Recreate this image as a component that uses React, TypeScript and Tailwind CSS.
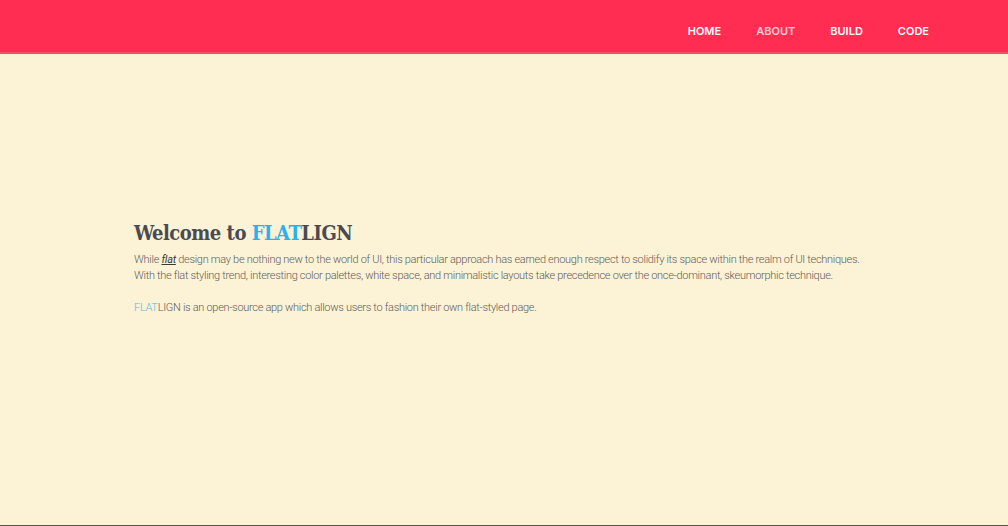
const App = () => {
  return (
    <div className="min-h-screen h-[526px] flex flex-col bg-[#fcf3d7] border-b border-[#55534c]">
      {/* Header */}
      <header className="h-[54px] shrink-0 bg-[#fe2d51] border-b-2 border-[#fe4a63] flex items-center justify-end pr-[79px]">
        <nav className="flex items-center gap-[35px] font-['Inter',sans-serif] text-[11px] font-semibold text-white pt-[11px]">
          <a className="cursor-pointer">HOME</a>
          <a className="cursor-pointer text-white/75">ABOUT</a>
          <a className="cursor-pointer">BUILD</a>
          <a className="cursor-pointer">CODE</a>
        </nav>
      </header>

      {/* Intro */}
      <main className="flex-1 px-[134px] pt-[165px]">
        <h1 className="font-['DejaVu_Serif_Condensed','Liberation_Serif',serif] font-bold text-[20px] leading-[28px] tracking-[-0.5px] text-[#4a4a50]">
          Welcome to <span className="text-[#2cb1ef]">FLAT</span>LIGN
        </h1>
        <div className="mt-[5px] whitespace-nowrap font-['Roboto',sans-serif] font-light text-[11px] leading-[16px] tracking-[-0.3px] text-[#5f5c58]">
          <p>
            While{' '}
            <em className="font-normal text-[#3a3a3a] underline">flat</em> design may be nothing new to the world of UI, this
            particular approach has earned enough respect to solidify its space within the realm of UI techniques.
            <br />
            With the flat styling trend, interesting color palettes, white space, and minimalistic layouts take
            precedence over the once-dominant, skeumorphic technique.
          </p>
          <p className="mt-[16px]">
            <span className="text-[#5ab8e8]">FLAT</span>LIGN is an open-source app which allows users to fashion their
            own flat-styled page.
          </p>
        </div>
      </main>
    </div>
  );
};

export default App;
